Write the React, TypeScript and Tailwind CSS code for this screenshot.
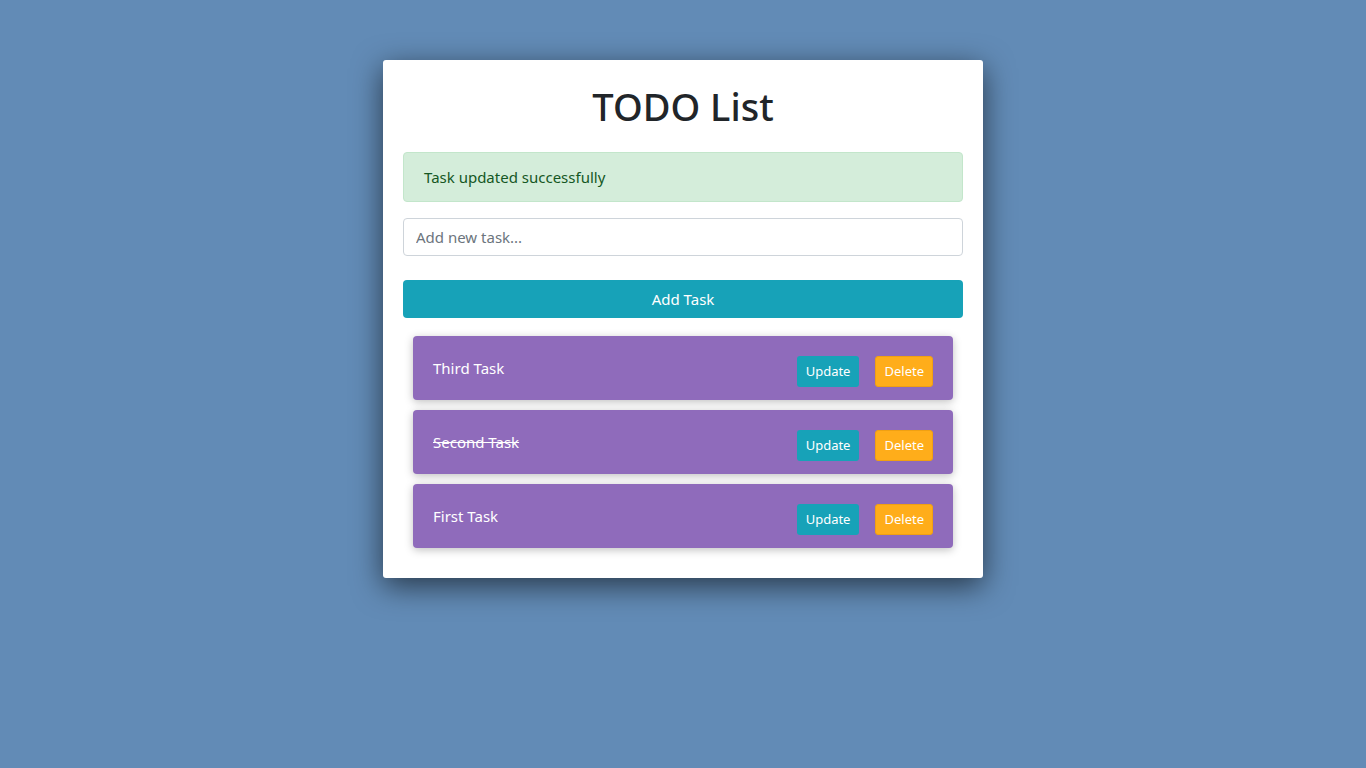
import React, { useState } from 'react';

type Task = { id: number; title: string; done: boolean };

const initialTasks: Task[] = [
  { id: 3, title: 'Third Task', done: false },
  { id: 2, title: 'Second Task', done: true },
  { id: 1, title: 'First Task', done: false },
];

function TaskItem({ task }: { task: Task }) {
  return (
    <li className="flex items-start justify-between rounded-[4px] bg-[#8f6bbb] pl-5 pr-5 pt-5 pb-[13px] shadow-[0_2px_8px_rgba(0,0,0,0.25)]">
      <span className={`text-[15px] leading-6 text-white ${task.done ? 'line-through' : ''}`}>
        {task.title}
      </span>
      <div className="flex gap-4">
        <button className="h-[31px] rounded-[3px] bg-[#17a2b8] px-[9px] text-[13px] text-white">
          Update
        </button>
        <button className="h-[31px] rounded-[3px] border border-[#f0a012] bg-[#ffad1a] px-[8px] text-[13px] text-white">
          Delete
        </button>
      </div>
    </li>
  );
}

export default function App() {
  const [tasks] = useState<Task[]>(initialTasks);

  return (
    <div
      className="min-h-screen bg-[#628bb6] pt-[60px]"
      style={{ fontFamily: '"Noto Sans", "Open Sans", sans-serif' }}
    >
      <div className="mx-auto w-[600px] rounded-[3px] bg-white px-5 pt-5 pb-[30px] shadow-[0_8px_30px_rgba(0,0,0,0.6)]">
        <h1 className="text-center text-[38px] font-medium leading-[52px] text-[#212529]">TODO List</h1>

        {/* Alert */}
        <div className="mt-5 rounded-[4px] border border-[#c3e6cb] bg-[#d4edda] px-5 py-3 text-[15px] leading-6 text-[#155724]">
          Task updated successfully
        </div>

        <input
          className="mt-4 block h-[38px] w-full rounded-[4px] border border-[#ced4da] px-3 text-[15px] text-[#495057] placeholder:text-[#6c757d] outline-none"
          placeholder="Add new task..."
        />

        <button className="mt-6 block h-[38px] w-full rounded-[4px] bg-[#17a2b8] text-[15px] text-white">
          Add Task
        </button>

        <ul className="mt-[18px] flex flex-col gap-[10px] px-[10px]">
          {tasks.map(t => (
            <TaskItem key={t.id} task={t} />
          ))}
        </ul>
      </div>
    </div>
  );
}
